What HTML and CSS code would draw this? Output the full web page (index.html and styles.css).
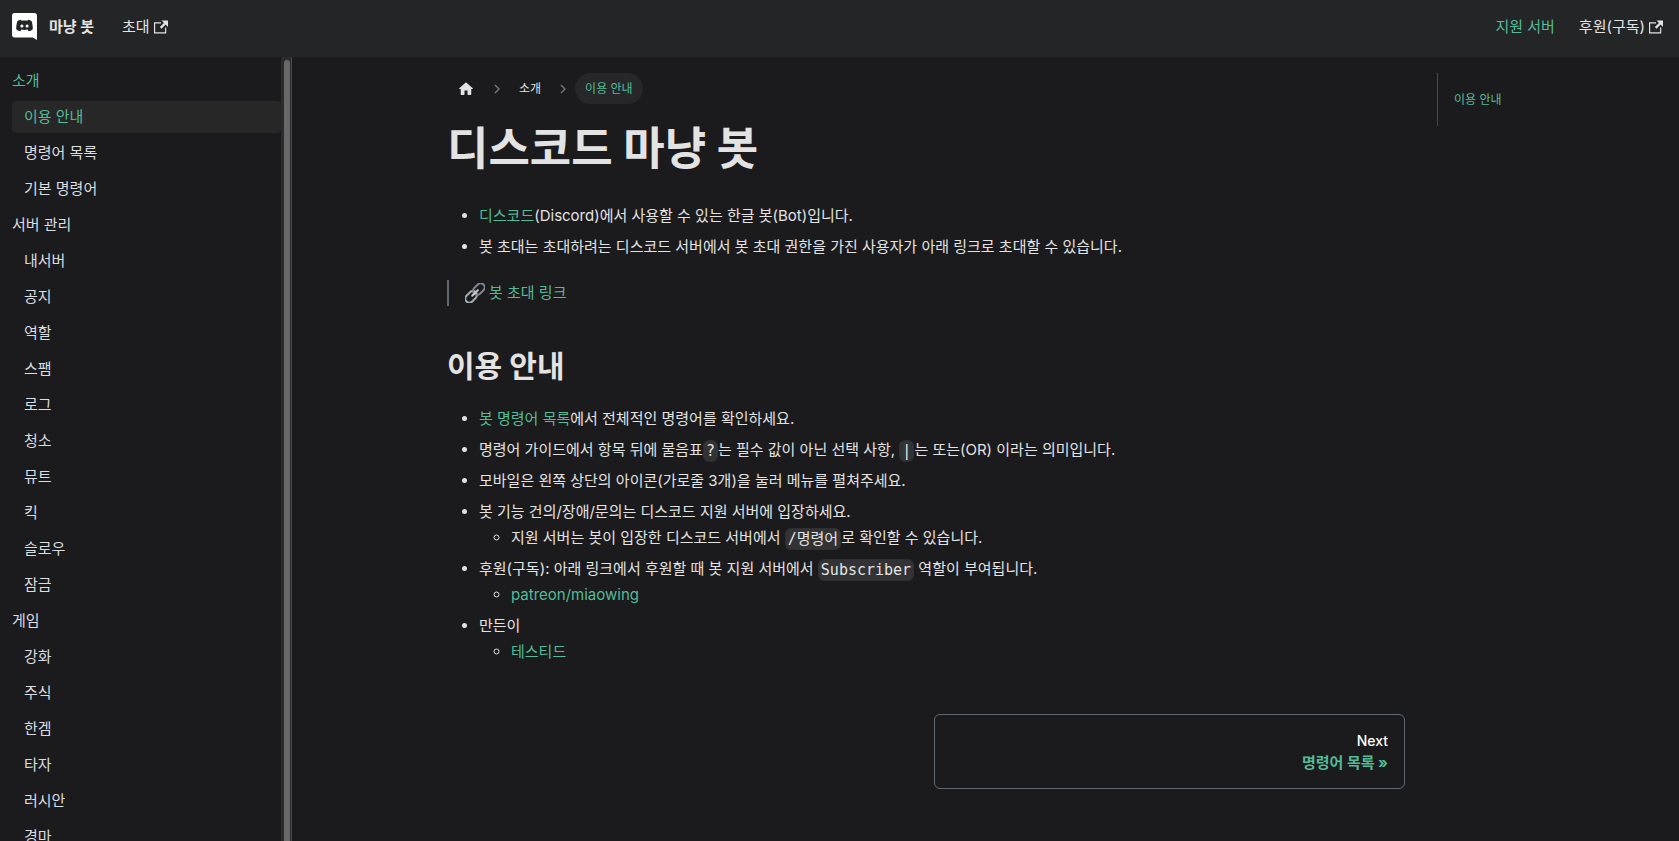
FILE: index.html
```html
<!DOCTYPE html>
<html lang="ko">
<head>
<meta charset="utf-8">
<meta name="viewport" content="width=device-width, initial-scale=1">
<title>디스코드 마냥 봇</title>
<link rel="stylesheet" href="styles.css">
</head>
<body>
<svg class="sprite" aria-hidden="true">
  <symbol id="external" viewBox="0 0 24 24"><path fill="currentColor" d="M21 13v10h-21v-19h12v2h-10v15h17v-8h2zm3-12h-10.988l4.035 4-6.977 7.07 2.828 2.828 6.977-7.07 4.125 4.172v-11z"/></symbol>
</svg>
<nav class="navbar">
  <a class="brand" href="#">
    <svg class="logo" viewBox="0 0 24 26" aria-hidden="true">
      <path fill="#fff" d="M2.500 0h19A2.500 2.500 0 0 1 24 2.500V26l-4-2.500H2.500A2.500 2.500 0 0 1 0 21V2.500A2.500 2.500 0 0 1 2.500 0z"/>
      <path fill="#242526" d="M8.500 6.500c-1.500.2-2.700.8-3.300 1.300C4.600 9.500 4 12.500 4 15.500c.9 1.400 2.300 2 4 2l1-1.500c2 .5 4 .5 6 0l1 1.500c1.700 0 3.100-.6 4-2 0-3-.6-6-1.200-7.700-.6-.5-1.800-1.100-3.300-1.300l-.7 1c-1.800-.3-3.800-.3-5.600 0z"/>
      <circle cx="9.500" cy="12.500" r="1.500" fill="#fff"/><circle cx="14.500" cy="12.500" r="1.500" fill="#fff"/>
    </svg>
    <b>마냥 봇</b>
  </a>
  <a class="nav-link" href="#">초대 <svg class="ext" aria-hidden="true"><use href="#external"/></svg></a>
  <div class="nav-right">
    <a class="nav-link active" href="#">지원 서버</a>
    <a class="nav-link" href="#">후원(구독) <svg class="ext" aria-hidden="true"><use href="#external"/></svg></a>
  </div>
</nav>
<div class="layout">
  <aside class="sidebar">
    <ul class="menu">
      <li><a class="active" href="#">소개</a>
        <ul>
          <li><a class="active current" href="#">이용 안내</a></li>
          <li><a href="#">명령어 목록</a></li>
          <li><a href="#">기본 명령어</a></li>
        </ul>
      </li>
      <li><a href="#">서버 관리</a>
        <ul>
          <li><a href="#">내서버</a></li>
          <li><a href="#">공지</a></li>
          <li><a href="#">역할</a></li>
          <li><a href="#">스팸</a></li>
          <li><a href="#">로그</a></li>
          <li><a href="#">청소</a></li>
          <li><a href="#">뮤트</a></li>
          <li><a href="#">킥</a></li>
          <li><a href="#">슬로우</a></li>
          <li><a href="#">잠금</a></li>
        </ul>
      </li>
      <li><a href="#">게임</a>
        <ul>
          <li><a href="#">강화</a></li>
          <li><a href="#">주식</a></li>
          <li><a href="#">한겜</a></li>
          <li><a href="#">타자</a></li>
          <li><a href="#">러시안</a></li>
          <li><a href="#">경마</a></li>
        </ul>
      </li>
    </ul>
    <div class="track"><div class="thumb"></div></div>
  </aside>
  <main class="main">
    <article class="article">
      <nav class="crumbs" aria-label="Breadcrumbs">
        <a href="#" aria-label="Home"><svg class="home" viewBox="0 0 24 24"><path fill="currentColor" d="M10 19v-5h4v5c0 .55.45 1 1 1h3c.55 0 1-.45 1-1v-7h1.700c.46 0 .68-.57.33-.87L12.670 3.600c-.38-.34-.96-.34-1.340 0l-8.360 7.530c-.34.3-.13.87.33.87H5v7c0 .55.45 1 1 1h3c.55 0 1-.45 1-1z"/></svg></a>
        <svg class="chev" viewBox="0 0 6 10"><path d="M1 1l4 4-4 4" fill="none" stroke="currentColor" stroke-width="1.300"/></svg>
        <a href="#">소개</a>
        <svg class="chev" viewBox="0 0 6 10"><path d="M1 1l4 4-4 4" fill="none" stroke="currentColor" stroke-width="1.300"/></svg>
        <span class="here">이용 안내</span>
      </nav>
      <h1>디스코드 마냥 봇</h1>
      <ul>
        <li><a href="#">디스코드</a>(Discord)에서 사용할 수 있는 한글 봇(Bot)입니다.</li>
        <li>봇 초대는 초대하려는 디스코드 서버에서 봇 초대 권한을 가진 사용자가 아래 링크로 초대할 수 있습니다.</li>
      </ul>
      <blockquote>
        <svg class="chain" viewBox="0 0 20 20" aria-hidden="true">
          <g fill="none" stroke-width="2" transform="rotate(-45 10 10)">
            <rect x="-2" y="6" width="13" height="8" rx="4" stroke="#a4abb2"/>
            <rect x="9" y="6" width="13" height="8" rx="4" stroke="#7f868d"/>
            <path d="M6 10h8" stroke="#c3c9ce" stroke-linecap="round"/>
          </g>
        </svg>
        <a href="#">봇 초대 링크</a>
      </blockquote>
      <h2>이용 안내</h2>
      <ul>
        <li><a href="#">봇 명령어 목록</a>에서 전체적인 명령어를 확인하세요.</li>
        <li>명령어 가이드에서 항목 뒤에 물음표<code>?</code>는 필수 값이 아닌 선택 사항, <code>|</code>는 또는(OR) 이라는 의미입니다.</li>
        <li>모바일은 왼쪽 상단의 아이콘(가로줄 3개)을 눌러 메뉴를 펼쳐주세요.</li>
        <li>봇 기능 건의/장애/문의는 디스코드 지원 서버에 입장하세요.
          <ul><li>지원 서버는 봇이 입장한 디스코드 서버에서 <code>/명령어</code>로 확인할 수 있습니다.</li></ul>
        </li>
        <li>후원(구독): 아래 링크에서 후원할 때 봇 지원 서버에서 <code>Subscriber</code> 역할이 부여됩니다.
          <ul><li><a href="#">patreon/miaowing</a></li></ul>
        </li>
        <li>만든이
          <ul><li><a href="#">테스티드</a></li></ul>
        </li>
      </ul>
      <nav class="pager" aria-label="Docs pages">
        <a class="next" href="#"><span>Next</span><b>명령어 목록 »</b></a>
      </nav>
    </article>
    <aside class="toc"><a href="#">이용 안내</a></aside>
  </main>
</div>
</body>
</html>
```
FILE: styles.css
```css
:root {
  --bg: #1b1b1d;
  --surface: #242526;
  --text: #e3e3e3;
  --primary: #54bb98;
  --muted: #606770;
}
* { box-sizing: border-box; }
body {
  margin: 0;
  height: 100vh;
  display: flex;
  flex-direction: column;
  overflow: hidden;
  background: var(--bg);
  color: var(--text);
  font: 15px/26px Inter, "Noto Sans CJK KR", sans-serif;
}
a { color: var(--primary); text-decoration: none; }
ul { margin: 0; padding: 0; }
.sprite { position: absolute; width: 0; height: 0; }

.navbar {
  flex: none;
  height: 57px;
  display: flex;
  align-items: center;
  padding: 0 16px 4px 12px;
  background: var(--surface);
}
.brand { display: flex; align-items: center; gap: 12px; color: var(--text); margin-right: 28px; }
.brand b { font-weight: 700; }
.logo { width: 25px; height: 27px; }
.nav-link { color: var(--text); display: flex; align-items: center; gap: 4px; }
.nav-link.active { color: var(--primary); }
.ext { width: 14px; height: 14px; }
.nav-right { display: flex; gap: 24px; margin-left: auto; }

.layout { flex: 1; min-height: 0; display: flex; }
.sidebar { flex: none; width: 292px; display: flex; overflow: hidden; border-right: 1px solid #47484a; }
.menu { flex: 1; padding: 8px 0 0 12px; list-style: none; }
.menu ul { list-style: none; padding-left: 0; }
.menu a { display: block; height: 32px; line-height: 32px; margin-bottom: 4px; color: #dadde1; border-radius: 4px; }
.menu ul a { padding-left: 12px; }
.menu a.active { color: var(--primary); }
.menu a.current { background: #272727; }
.track { width: 10px; padding: 3px 1px 0 3px; background: #2b2b2b; }
.thumb { height: 100%; border-radius: 3px 3px 0 0; background: #686868; }

.main { flex: 1; min-width: 0; display: flex; gap: 32px; padding: 16px 16px 0 155px; }
.article { flex: 1; min-width: 0; }
.toc { width: 226px; height: 53px; padding: 14px 16px; border-left: 1px solid #47484a; font-size: 12px; }
.toc a { display: block; }

.crumbs { display: flex; align-items: center; height: 31px; font-size: 12px; margin-bottom: 15px; }
.crumbs a, .here { display: flex; align-items: center; height: 31px; padding: 0 10px; color: var(--text); }
.crumbs .here { color: var(--primary); background: #272729; border-radius: 16px; }
.home { width: 18px; height: 18px; }
.chev { width: 6px; height: 10px; margin: 0 9px; color: #7b7b7d; }

h1 { margin: 0 0 24px; font-size: 45px; line-height: 60px; font-weight: 700; }
h2 { margin: 40px 0 20px; font-size: 30px; line-height: 40px; font-weight: 700; }
.article ul { padding-left: 32px; }
.article > ul > li + li { margin-top: 5px; }
blockquote { display: flex; align-items: center; gap: 4px; margin: 20px 0 0; padding-left: 16px; border-left: 2px solid var(--muted); }
.chain { width: 20px; height: 20px; }
code {
  font: 15px/20px "DejaVu Sans Mono", "Noto Sans CJK KR", monospace;
  display: inline-block;
  vertical-align: middle;
  padding: 0 2px;
  border: 1px solid #2f2f31;
  border-radius: 6px;
  background: #333335;
}
.pager { display: flex; justify-content: flex-end; margin-top: 49px; }
.next {
  width: calc(50% - 8px);
  display: flex;
  flex-direction: column;
  align-items: flex-end;
  padding: 15px 16px 14px;
  border: 1px solid var(--muted);
  border-radius: 6px;
  line-height: 22px;
}
.next span { color: #fff; font-size: 14px; font-weight: 500; }
.next b { font-weight: 700; }
```
